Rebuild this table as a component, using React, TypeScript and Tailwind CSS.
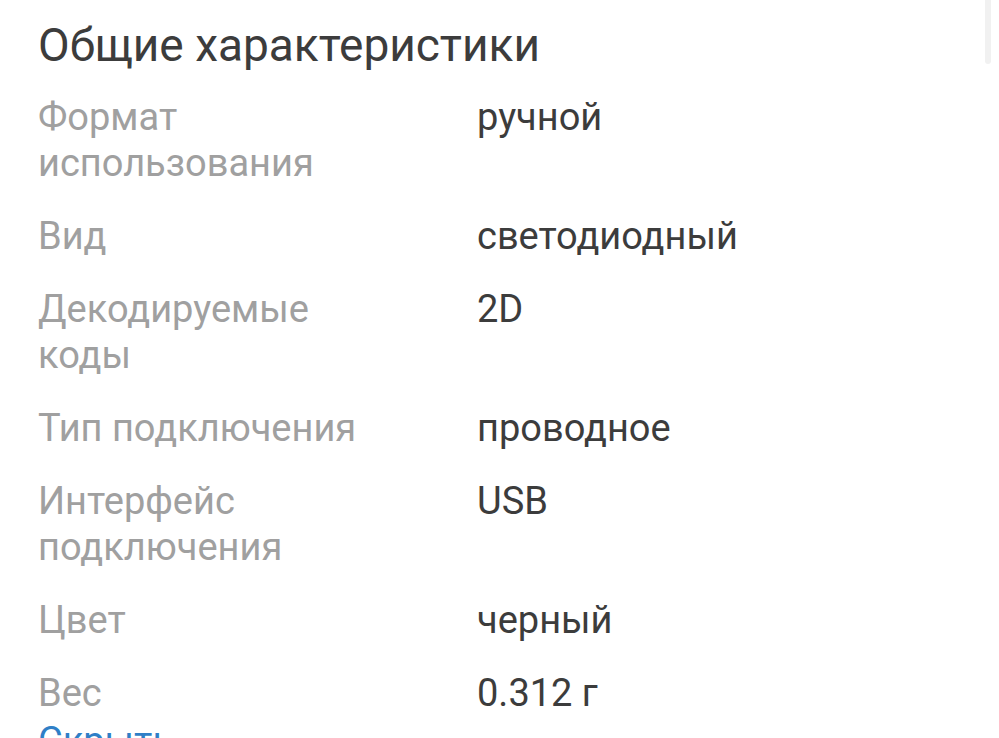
const specs: { label: string; value: string }[] = [
  { label: 'Формат использования', value: 'ручной' },
  { label: 'Вид', value: 'светодиодный' },
  { label: 'Декодируемые коды', value: '2D' },
  { label: 'Тип подключения', value: 'проводное' },
  { label: 'Интерфейс подключения', value: 'USB' },
  { label: 'Цвет', value: 'черный' },
  { label: 'Вес', value: '0.312 г' },
];

export default function App() {
  return (
    <div className="relative h-[738px] w-[999px] overflow-hidden bg-white font-['Roboto',sans-serif]">
      {/* scroll indicator */}
      <div className="absolute right-[8px] top-0 h-[64px] w-[6px] rounded-b bg-[#f1f1f1]" />

      <div className="pl-[38px] pt-[17px]">
        <h2 className="text-[46px] leading-[56px] font-normal text-[#3c3c3c]">
          Общие характеристики
        </h2>

        <dl className="mt-[21px] flex flex-col gap-[27px]">
          {specs.map((s) => (
            <div key={s.label} className="flex text-[38px] leading-[46px]">
              <dt className="w-[439px] shrink-0 pr-[90px] text-[#a0a0a0]">{s.label}</dt>
              <dd className="text-[#3c3c3c]">{s.value}</dd>
            </div>
          ))}
        </dl>

        <button className="mt-[2px] text-[38px] leading-[46px] text-[#2f7fc7]">Скрыть</button>
      </div>
    </div>
  );
}
